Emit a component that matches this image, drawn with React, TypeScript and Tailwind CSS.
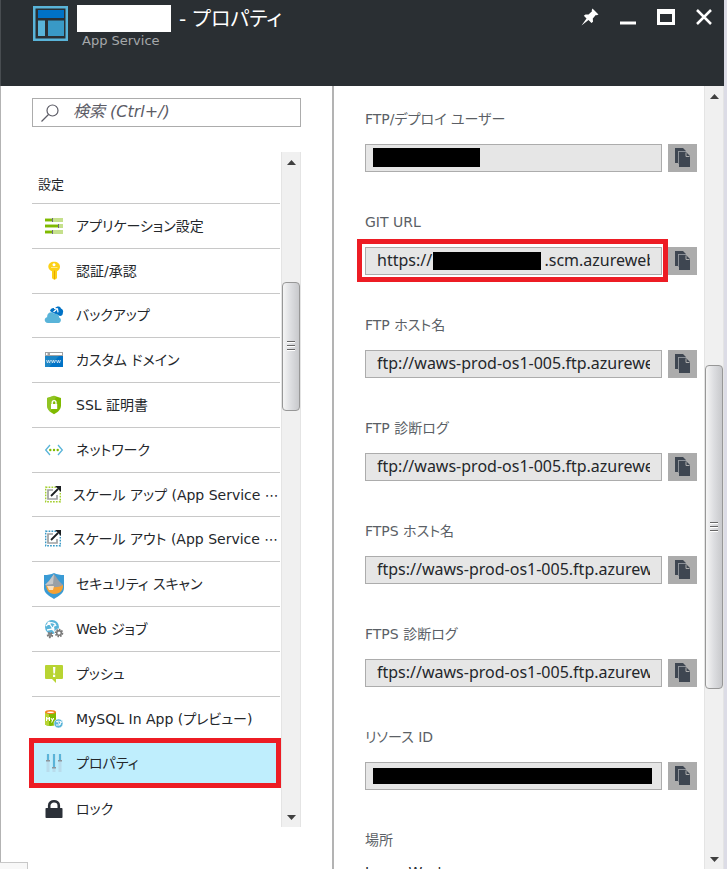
import type { ReactNode } from "react";

interface MenuItem {
  label: string;
  icon: ReactNode;
  selected?: boolean;
}

interface Property {
  id: string;
  label: string;
  value: string;
  mask?: string;
  highlighted?: boolean;
}

function Icon({ children }: { children: ReactNode }) {
  return (
    <svg viewBox="0 0 20 20" className="h-5 w-5 shrink-0" aria-hidden="true">
      {children}
    </svg>
  );
}

function SettingsIcon() {
  return (
    <Icon>
      {[2, 8, 14].map((y, i) => (
        <g key={y}>
          <rect x="1" y={y} width="18" height="4" fill="#c5e08c" />
          <rect x="1" y={y + 1} width={i === 1 ? 13 : 7} height="2" fill="#7fba00" />
          <rect x={i === 1 ? 14 : 8} y={y} width="1" height="4" fill="#6b6b7b" />
        </g>
      ))}
    </Icon>
  );
}

function KeyIcon() {
  return (
    <Icon>
      <path
        fill="#fcd116"
        fillRule="evenodd"
        d="M10 .8c3.500 0 6 2 6 5 0 2-1.300 3.600-3 4.400v7L10.500 19 8 17.200v-7C6 9.400 4.300 7.800 4.300 5.800 4.300 2.800 6.700.8 10 .8Zm0 1.400a1.500 1.500 0 1 0 .01 0Z"
      />
      <path d="M10.500 9.500v8.500" stroke="#e8a800" />
      <path d="M7 6.500h6.500" stroke="#ffe88a" />
    </Icon>
  );
}

function BackupIcon() {
  return (
    <Icon>
      <path fill="#0072c6" d="M6 6c.5-2.500 3-3.600 5-2.600C12.500 1 16 .8 17 3.500c2 .8 2.700 3 1.800 4.500.3 1.500-.8 3-2.800 3L9 8Z" />
      <path d="m10 3.500 3.500.3.500 3.500M13 4l-3.500 3" fill="none" stroke="#fff" strokeWidth="1.200" />
      <path fill="#59b4d9" d="M4 18c-4 0-4.400-5.200-.8-5.800C2.500 8 7.500 5.300 10.300 9c2.800-1 5.200 1 4.700 3.500 2.800.6 2.400 5-.6 5.500Z" />
    </Icon>
  );
}

function DomainIcon() {
  return (
    <Icon>
      <path fill="#a0a1a2" d="M1 2h18v4H1z" />
      <path fill="#fff" d="M6 3h12v2H6zM2 3h1.500v2H2z" />
      <path fill="#0072c6" d="M1 6h18v11H1z" />
      <path fill="#3999c6" opacity=".5" d="M1 6h14L5 17H1z" />
      <path d="m2.500 10 1 3 1-3 1 3 1-3m1 0 1 3 1-3 1 3 1-3m1 0 1 3 1-3 1 3 1-3" fill="none" stroke="#d8e8f5" strokeWidth=".8" />
    </Icon>
  );
}

function CertificateIcon() {
  return (
    <Icon>
      <path fill="#7fba00" d="M10 .8 17 3v7.500c0 4.500-4 7-7 8.700-3-1.700-7-4.200-7-8.700V3Z" />
      <path fill="#97c932" opacity=".7" d="M10 .8 3 3v7.500c0 3 1.500 5 3.500 6.500L12 1.500Z" />
      <path fill="#fff" d="M7 9h6.200v5H7z" />
      <path d="M8.200 9V7.500a1.900 1.900 0 0 1 3.800 0V9" fill="none" stroke="#fff" strokeWidth="1.300" />
    </Icon>
  );
}

function NetworkIcon() {
  return (
    <Icon>
      <path d="M6 5 1.700 10 6 15M14 5l4.300 5-4.300 5" fill="none" stroke="#59b4d9" strokeWidth="1.300" />
      <circle cx="6.300" cy="10" r="1.200" fill="#7fba00" />
      <circle cx="10" cy="10" r="1.200" fill="#7fba00" />
      <circle cx="13.700" cy="10" r="1.200" fill="#7fba00" />
    </Icon>
  );
}

function ScaleIcon({ color }: { color: string }) {
  return (
    <svg viewBox="0 0 17 20" className="h-5 w-[17px] shrink-0" aria-hidden="true">
      <rect x="1.700" y="2.200" width="14.600" height="14.600" fill="none" stroke={color} strokeWidth="1.400" strokeDasharray="1.700 1.200" />
      <path d="M9 5H4v9h9v-4" fill="none" stroke="#a0a1a2" strokeWidth="1.700" />
      <path d="M10 0h8v8z" fill="#fff" />
      <path d="m7 11 7-7" stroke="#1c1f22" strokeWidth="1.800" />
      <path fill="#1c1f22" d="M11 1h6v6Z" />
    </svg>
  );
}

function SecurityIcon() {
  return (
    <svg viewBox="0 0 20 26" className="mt-1 h-[26px] w-5 shrink-0" aria-hidden="true">
      <path fill="#3a9bd5" d="M0 2c4 0 7-.5 10-2 3 1.500 6 2 10 2v13c0 5-5 8-10 11C5 23 0 20 0 15Z" />
      <path fill="#f5a133" d="M2 12h17c.5 5-3 9-9 9-4.500 0-8-4-8-9Z" />
      <path fill="#999fa5" d="m10 1 5 7 4 4c-4 3-14 3-18 0l4-4Z" />
      <path fill="#c5c8ca" d="m10 1-1 10-8 1 4-4Z" />
      <path fill="#f8e0c0" d="M3 13h7l-1 4H5Z" />
    </svg>
  );
}

function Gear({ cx, cy, r }: { cx: number; cy: number; r: number }) {
  return (
    <>
      <circle cx={cx} cy={cy} r={r} fill="none" stroke="#7a7a7a" strokeWidth="2" strokeDasharray="1.500 1" />
      <circle cx={cx} cy={cy} r={r - 1} fill="none" stroke="#7a7a7a" strokeWidth="1.500" />
    </>
  );
}

function WebJobsIcon() {
  return (
    <Icon>
      <circle cx="8" cy="8" r="7" fill="#59b4d9" />
      <path d="M5 4c3-1 6 0 7 3M3 11l6-1 2-6M5 4l4 6 2 4M2 7l3-3" fill="none" stroke="#fff" strokeWidth="1.300" />
      <circle cx="5" cy="4" r="1.600" fill="#fff" />
      <circle cx="9" cy="10" r="1.600" fill="#fff" />
      <Gear cx={6} cy={16} r={2.2} />
      <circle cx="15" cy="14" r="4.500" fill="#fff" />
      <Gear cx={15} cy={14} r={3.3} />
    </Icon>
  );
}

function PushIcon() {
  return (
    <Icon>
      <path fill="#b8d432" d="M2 1h16a1 1 0 0 1 1 1v12a1 1 0 0 1-1 1h-6v4l-4-4H2a1 1 0 0 1-1-1V2a1 1 0 0 1 1-1Z" />
      <path fill="#fff" d="M9 3h2.400L11 9.500H9.400zM9 10.800h2.200V13H9z" />
    </Icon>
  );
}

function MySqlIcon() {
  return (
    <Icon>
      <path fill="#7fba00" d="M1 3h11v12c0 2.500-11 2.500-11 0Z" />
      <path fill="#b8d432" d="M1 3h4v13.500C2.500 16.300 1 16 1 15Z" />
      <ellipse cx="6.500" cy="3" rx="5.500" ry="2" fill="#f58220" />
      <ellipse cx="6.500" cy="3.200" rx="3.500" ry=".8" fill="#fff" />
      <path d="M2.500 12V8L4 10.500 5.500 8v4M7 9l1.300 2.500L9.600 9l-2 4.500" fill="none" stroke="#fff" />
      <circle cx="14.500" cy="14.500" r="4.500" fill="#59b4d9" stroke="#fff" strokeWidth=".6" />
      <path d="M12 13c3-2 5 0 6 1M12 16l4 0 1-4M13 12l3 4" fill="none" stroke="#fff" />
    </Icon>
  );
}

function PropertiesIcon() {
  return (
    <Icon>
      {[
        { x: 2, knob: 7 },
        { x: 8, knob: 14 },
        { x: 14, knob: 7 },
      ].map(({ x, knob }) => (
        <g key={x}>
          <rect x={x + 0.5} y="1" width="3" height="18" fill="#b9dcec" />
          <rect x={x + 1} y="1" width="2" height={knob} fill="#59b4d9" />
          <rect x={x} y={knob} width="4" height="1.500" fill="#8d969c" />
        </g>
      ))}
    </Icon>
  );
}

function LockIcon() {
  return (
    <Icon>
      <path d="M5.200 10V6.500c0-5.600 9.600-5.600 9.600 0V10" fill="none" stroke="#2b3038" strokeWidth="2.600" />
      <rect x="1.500" y="9" width="17" height="10" rx=".8" fill="#2b3038" />
    </Icon>
  );
}

function CopyIcon() {
  return (
    <svg viewBox="0 0 17 20" className="h-5 w-[17px]" aria-hidden="true">
      <path fill="#3e4651" d="M1 0h8l3 3H4v12H1z" />
      <path fill="#3e4651" d="M5 4h7l4 4v11H5z" />
      <path d="M4.500 16V3.500H12" fill="none" stroke="#8b9097" />
      <path d="M12 4.500v4h3.500" fill="none" stroke="#acacac" />
    </svg>
  );
}

const menuItems: MenuItem[] = [
  { label: "アプリケーション設定", icon: <SettingsIcon /> },
  { label: "認証/承認", icon: <KeyIcon /> },
  { label: "バックアップ", icon: <BackupIcon /> },
  { label: "カスタム ドメイン", icon: <DomainIcon /> },
  { label: "SSL 証明書", icon: <CertificateIcon /> },
  { label: "ネットワーク", icon: <NetworkIcon /> },
  { label: "スケール アップ (App Service ⋯", icon: <ScaleIcon color="#a4cf30" /> },
  { label: "スケール アウト (App Service ⋯", icon: <ScaleIcon color="#3999c6" /> },
  { label: "セキュリティ スキャン", icon: <SecurityIcon /> },
  { label: "Web ジョブ", icon: <WebJobsIcon /> },
  { label: "プッシュ", icon: <PushIcon /> },
  { label: "MySQL In App (プレビュー)", icon: <MySqlIcon /> },
  { label: "プロパティ", icon: <PropertiesIcon />, selected: true },
  { label: "ロック", icon: <LockIcon /> },
];

const properties: Property[] = [
  { id: "ftp-user", label: "FTP/デプロイ ユーザー", value: "", mask: "left-2 top-1 h-[19px] w-[107px]" },
  {
    id: "git-url",
    label: "GIT URL",
    value: `https://${"\u00a0".repeat(27)}.scm.azurewebsites.net`,
    mask: "left-[68px] top-[5px] h-[18px] w-[108px]",
    highlighted: true,
  },
  { id: "ftp-host", label: "FTP ホスト名", value: "ftp://waws-prod-os1-005.ftp.azurewebsites.windows.net" },
  { id: "ftp-log", label: "FTP 診断ログ", value: "ftp://waws-prod-os1-005.ftp.azurewebsites.windows.net" },
  { id: "ftps-host", label: "FTPS ホスト名", value: "ftps://waws-prod-os1-005.ftp.azurewebsites.windows.net" },
  { id: "ftps-log", label: "FTPS 診断ログ", value: "ftps://waws-prod-os1-005.ftp.azurewebsites.windows.net" },
  { id: "resource-id", label: "リソース ID", value: "", mask: "left-2 right-2.5 top-[6px] h-4" },
];

function Scrollbar({ start, size }: { start: number; size: number }) {
  return (
    <div className="flex w-5 shrink-0 flex-col border-x border-[#e4e4e4] bg-[#f0f0f0]">
      <button type="button" aria-label="上へスクロール" className="flex h-5 shrink-0 items-center justify-center">
        <svg viewBox="0 0 9 5" className="h-[5px] w-[9px]">
          <path fill="#404040" d="M0 5 4.500 0 9 5z" />
        </svg>
      </button>
      <div className="min-h-0 flex-1">
        <div className="flex h-full flex-col">
          <div className="shrink-0" style={{ height: `${start}%` }} />
          <div
            className="flex shrink-0 flex-col items-center justify-center gap-0.5 rounded-sm border border-[#979797] bg-linear-to-r from-[#f5f5f5] via-[#dcdde0] to-[#c8c9cc]"
            style={{ height: `${size}%` }}
          >
            <span className="h-0.5 w-2 border-b border-white bg-[#666]" />
            <span className="h-0.5 w-2 border-b border-white bg-[#666]" />
            <span className="h-0.5 w-2 border-b border-white bg-[#666]" />
          </div>
        </div>
      </div>
      <button type="button" aria-label="下へスクロール" className="flex h-5 shrink-0 items-center justify-center">
        <svg viewBox="0 0 9 5" className="h-[5px] w-[9px]">
          <path fill="#404040" d="M0 0h9L4.500 5z" />
        </svg>
      </button>
    </div>
  );
}

function Header() {
  return (
    <header className="flex h-[86px] shrink-0 items-start border-l border-[#484d51] bg-[#2a2f33] pr-[11px] pl-8 text-white">
      <svg viewBox="0 0 35 35" className="mt-1.5 h-[35px] w-[35px] shrink-0" aria-hidden="true">
        <path fill="#59b4d9" d="M0 0h35v35H0z" />
        <path fill="#2a2f33" d="M2.500 2.500h30v30h-30z" />
        <path fill="#0072c6" d="M5 4h26v8H5z" />
        <path fill="#59b4d9" d="M5 14.500h7V30H5z" />
        <path fill="#3999c6" d="M15 14.500h16V30H15z" />
      </svg>
      <div className="ml-[9px] min-w-0 flex-1 pt-[5px]">
        <h1 className="flex h-[27px] items-center text-xl leading-6 whitespace-nowrap">
          <span className="mr-2 h-[27px] w-[94px] bg-white" />- プロパティ
        </h1>
        <p className="pl-[5px] text-[13px] leading-[18px] text-[#a5a8aa]">App Service</p>
      </div>
      <div className="flex gap-5 pt-2">
        <button type="button" aria-label="ピン留め">
          <svg viewBox="0 0 18 18" className="h-[18px] w-[18px]">
            <path fill="#fff" d="m11.500.5 6 6-1.800.8-.9-.4-3 3.500.2 3.300-1.500 1.200-3-3L.5 17.500l5-7-2.700-2.700L4.500 6.500l3 .1L11 3.300l-.3-1.100z" />
          </svg>
        </button>
        <button type="button" aria-label="最小化">
          <svg viewBox="0 0 18 18" className="h-[18px] w-[18px]">
            <path fill="#fff" d="M1 13.500h16v3H1z" />
          </svg>
        </button>
        <button type="button" aria-label="最大化">
          <svg viewBox="0 0 18 18" className="h-[18px] w-[18px]">
            <path fill="#fff" fillRule="evenodd" d="M0 1h18v16H0zm3 5v8h12V6z" />
          </svg>
        </button>
        <button type="button" aria-label="閉じる">
          <svg viewBox="0 0 18 18" className="h-[18px] w-[18px]">
            <path d="m2 2 14 14M16 2 2 16" stroke="#fff" strokeWidth="2.500" />
          </svg>
        </button>
      </div>
    </header>
  );
}

function Sidebar() {
  return (
    <aside className="flex w-[334px] shrink-0 flex-col border-r-2 border-[#b3b3b3]">
      <div className="flex min-h-0 flex-1 flex-col border-l border-[#b3b3b3] pr-[31px] pl-7 pb-[35px]">
        <label className="mt-3 ml-[3px] flex h-[29px] shrink-0 items-center border border-[#acacac] pl-2">
          <svg viewBox="0 0 18 18" className="h-[18px] w-[18px] shrink-0" aria-hidden="true">
            <circle cx="11.500" cy="6.500" r="5.500" fill="none" stroke="#5c5c66" strokeWidth="1.200" />
            <path d="m7.500 10.500-7 7" stroke="#5c5c66" strokeWidth="1.200" />
          </svg>
          <input
            type="search"
            aria-label="検索"
            placeholder="検索 (Ctrl+/)"
            className="mb-0.5 ml-3.5 min-w-0 flex-1 text-base leading-5 italic outline-none placeholder:text-[#5c5c66]"
          />
        </label>
        <div className="mt-[25px] flex min-h-0 flex-1">
          <nav className="min-w-0 flex-1 overflow-hidden pr-px pl-[3px]">
            <h2 className="flex h-[52px] items-end border-b border-[#c8c8c8] pb-2 pl-1.5 text-[13px] leading-5">設定</h2>
            <ul className="grid h-[627px] auto-rows-fr grid-cols-1">
              {menuItems.map((item) => (
                <li key={item.label} className="relative min-w-0 border-b border-[#c8c8c8] last:border-b-0">
                  <a
                    href="#"
                    aria-current={item.selected ? "page" : undefined}
                    className={`flex h-full items-center gap-3 pl-3 text-sm leading-5 whitespace-nowrap ${item.selected ? "bg-[#bfeefd]" : ""}`}
                  >
                    {item.icon}
                    {item.label}
                  </a>
                  {item.selected && <span className="absolute -inset-y-[3px] -right-px -left-[3px] border-5 border-[#ed1c24]" />}
                </li>
              ))}
            </ul>
          </nav>
          <Scrollbar start={17.3} size={20.3} />
        </div>
      </div>
      <div className="h-[7px] w-7 shrink-0 border-t border-r border-[#c8c8c8] bg-[#f8f8f8]" />
    </aside>
  );
}

function PropertyField({ property }: { property: Property }) {
  return (
    <div>
      <label htmlFor={property.id} className="block text-sm leading-5 text-[#5b5f66]">
        {property.label}
      </label>
      <div className="mt-[15px] flex gap-1.5">
        <div className="relative min-w-0 flex-1">
          <input
            id={property.id}
            readOnly
            value={property.value}
            className="block h-7 w-full border border-[#acacac] bg-[#e6e6e6] px-[11px] pb-0.5 font-['Noto_Sans',sans-serif] text-base leading-5 outline-none"
          />
          {property.mask && <span className={`absolute bg-black ${property.mask}`} />}
          {property.highlighted && <span className="absolute -top-2 -right-1.5 -bottom-[7px] -left-2 border-5 border-[#ed1c24]" />}
        </div>
        <button type="button" aria-label="コピー" className="flex h-7 w-[29px] shrink-0 items-center justify-center bg-[#acacac]">
          <CopyIcon />
        </button>
      </div>
    </div>
  );
}

export default function App() {
  return (
    <div
      lang="ja"
      className="flex h-screen overflow-hidden bg-white font-['DejaVu_Sans','Noto_Sans_CJK_JP',sans-serif] text-[#24272b] [font-feature-settings:'palt']"
    >
      <div className="flex min-w-0 flex-1 flex-col">
        <Header />
        <div className="flex min-h-0 flex-1">
          <Sidebar />
          <main className="flex min-w-0 flex-1">
            <div className="flex min-w-0 flex-1 flex-col gap-10 overflow-hidden pt-[23px] pr-[7px] pl-[31px]">
              {properties.map((property) => (
                <PropertyField key={property.id} property={property} />
              ))}
              <div className="text-sm leading-5">
                <div className="text-[#5b5f66]">場所</div>
                <div className="mt-3">Japan West</div>
              </div>
            </div>
            <Scrollbar start={34.9} size={43.6} />
          </main>
        </div>
      </div>
      <div className="w-[3px] shrink-0 bg-[#dcdce6]" />
    </div>
  );
}
